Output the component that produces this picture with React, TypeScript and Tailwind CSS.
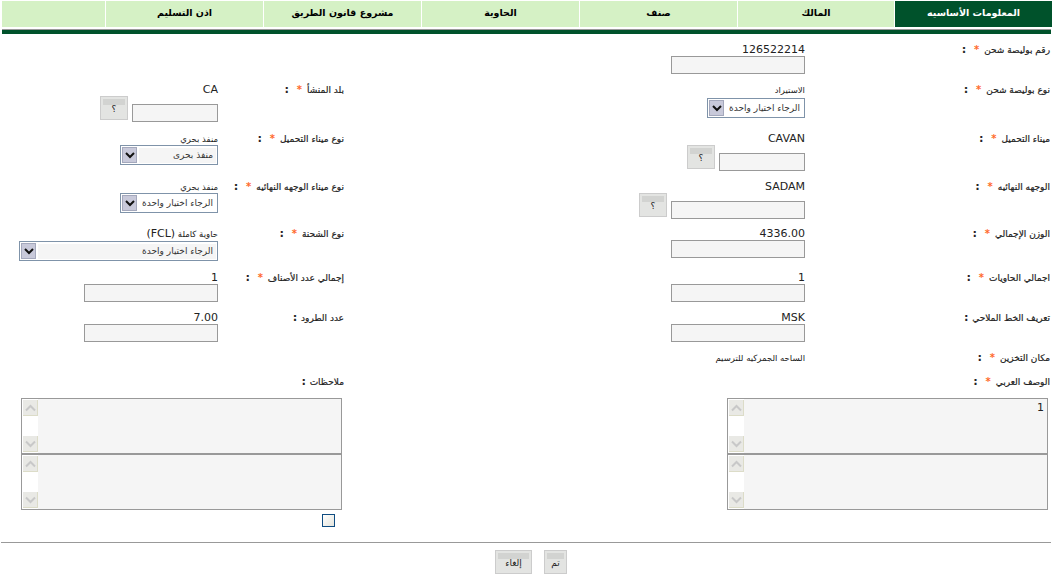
import type { ReactNode } from 'react';

const tabs = ['المعلومات الأساسيه', 'المالك', 'صنف', 'الحاوية', 'مشروع قانون الطريق', 'اذن التسليم'];

function Label({ text, required }: { text: string; required?: boolean }) {
  return (
    <div className="text-[9px] leading-[14px] text-[#222] whitespace-nowrap [-webkit-text-stroke:0.2px_#222]">
      {text}
      {required && <span className="mx-[5px] text-[10px] font-bold text-[#ff6a2b] [-webkit-text-stroke:0]">*</span>}
      <span className={required ? 'mr-[3px] text-[10px] font-bold text-[#222]' : 'mr-[4px] text-[10px] font-bold text-[#222]'}>:</span>
    </div>
  );
}

function Value({ children, small }: { children: ReactNode; small?: boolean }) {
  return (
    <div className={small ? 'h-[13px] text-[8.5px] leading-[14px] text-[#222]' : 'h-[13px] text-[11px] leading-[14px] text-[#222]'}>
      {children}
    </div>
  );
}

function TextInput({ width }: { width: string }) {
  return <input readOnly className={`${width} block h-[18px] border border-[#999] bg-[#f5f5f5]`} />;
}

function GrayButton({ label, width }: { label: string; width: string }) {
  return (
    <button className={`${width} flex h-[24px] shrink-0 flex-col border border-[#ccc] bg-[#e3e4e2] text-[9px] text-[#222]`}>
      <span className="mx-[2px] mt-[2px] h-[6px] self-stretch bg-[#d2d3d1]" />
      <span className="-mt-[3px] w-full text-center leading-[14px]">{label}</span>
    </button>
  );
}

function LookupInput({ inputWidth }: { inputWidth: string }) {
  return (
    <div className="flex items-start gap-[4px]">
      <div className="mt-[8px]">
        <TextInput width={inputWidth} />
      </div>
      <GrayButton label="؟" width="w-[28px]" />
    </div>
  );
}

function SelectBox({ text, width, shaded }: { text: string; width: string; shaded?: boolean }) {
  return (
    <div className={`${width} flex h-[20px] items-center border border-[#7f93a9] bg-white p-px`}>
      <div className={`flex-1 pr-[3px] text-[9px] leading-[15px] text-[#333] ${shaded ? 'bg-[#f5f5f5]' : ''}`}>{text}</div>
      <div className="mr-[2px] flex h-[16px] w-[15px] items-center justify-center border border-[#a4a8bc] bg-[#c8c9da]">
        <svg width="10" height="7" viewBox="0 0 10 7">
          <path d="M1 1 L5 5 L9 1" fill="none" stroke="#111" strokeWidth="2" />
        </svg>
      </div>
    </div>
  );
}

function ScrollArrow({ up }: { up?: boolean }) {
  return (
    <div className="flex h-[16px] w-[15px] items-center justify-center border-r border-b border-[#dcdcc8] bg-[#e9e9e5]">
      <svg width="11" height="8" viewBox="0 0 11 8">
        <path d={up ? 'M1 6.5 L5.5 2 L10 6.5' : 'M1 1.5 L5.5 6 L10 1.5'} fill="none" stroke="#c8c8c8" strokeWidth="2" />
      </svg>
    </div>
  );
}

function NoteBox({ text }: { text?: string }) {
  return (
    <div className="flex h-[56px] border border-[#999] bg-[#f5f5f5]">
      <div className="flex-1 pt-[2px] pr-[3px] text-[11px] leading-[14px] text-[#222]">{text}</div>
      <div className="flex w-[16px] flex-col justify-between bg-white py-px">
        <ScrollArrow up />
        <ScrollArrow />
      </div>
    </div>
  );
}

function Row({ height, children }: { height: string; children: ReactNode }) {
  return <div className={`${height} grid grid-cols-[245px_461px_126px_218px]`}>{children}</div>;
}

export default function App() {
  return (
    <div dir="rtl" className="h-[579px] w-[1053px] overflow-hidden bg-white font-['DejaVu_Sans',sans-serif]">
      <div className="flex h-[27px] gap-px pr-px pl-[2px] pt-px">
        {tabs.map((tab, i) => (
          <div
            key={tab}
            className={
              i === 0
                ? 'flex w-[157px] items-center justify-center bg-[#00522b] pb-px text-[9.5px] font-bold text-white'
                : i === 1
                  ? 'flex w-[156px] items-center justify-center bg-[#d5f1c5] pb-px text-[9.5px] font-bold text-black'
                  : 'flex w-[157px] items-center justify-center bg-[#d5f1c5] pb-px text-[9.5px] font-bold text-black'
            }
          >
            {tab}
          </div>
        ))}
        <div className="flex-1 bg-[#d5f1c5]" />
      </div>
      <div className="mt-[2px] mr-[2px] ml-[2px] h-[5px] border-t border-[#999] bg-[#00522b]" />

      <div className="mt-[9px] mr-[3px]">
        <Row height="h-[40px]">
          <Label text="رقم بوليصة شحن" required />
          <div>
            <Value>126522214</Value>
            <TextInput width="w-[134px]" />
          </div>
          <div />
          <div />
        </Row>
        <Row height="h-[49px]">
          <Label text="نوع بوليصة شحن" required />
          <div>
            <Value small>الاستيراد</Value>
            <div className="mt-[2px]">
              <SelectBox text="الرجاء اختيار واحدة" width="w-[98px]" />
            </div>
          </div>
          <Label text="بلد المنشأ" required />
          <div>
            <Value>CA</Value>
            <LookupInput inputWidth="w-[86px]" />
          </div>
        </Row>
        <Row height="h-[48px]">
          <Label text="ميناء التحميل" required />
          <div>
            <Value>CAVAN</Value>
            <LookupInput inputWidth="w-[86px]" />
          </div>
          <Label text="نوع ميناء التحميل" required />
          <div>
            <Value small>منفذ بحري</Value>
            <SelectBox text="منفذ بحرى" width="w-[98px]" shaded />
          </div>
        </Row>
        <Row height="h-[47px]">
          <Label text="الوجهه النهائيه" required />
          <div>
            <Value>SADAM</Value>
            <LookupInput inputWidth="w-[134px]" />
          </div>
          <Label text="نوع ميناء الوجهه النهائيه" required />
          <div>
            <Value small>منفذ بحري</Value>
            <SelectBox text="الرجاء اختيار واحدة" width="w-[98px]" />
          </div>
        </Row>
        <Row height="h-[44px]">
          <Label text="الوزن الإجمالي" required />
          <div>
            <Value>4336.00</Value>
            <TextInput width="w-[134px]" />
          </div>
          <Label text="نوع الشحنة" required />
          <div>
            <Value small>
              حاوية كاملة <span className="text-[11px]">(FCL)</span>
            </Value>
            <div className="mt-px">
              <SelectBox text="الرجاء اختيار واحدة" width="w-[199px]" shaded />
            </div>
          </div>
        </Row>
        <Row height="h-[40px]">
          <Label text="اجمالي الحاويات" required />
          <div>
            <Value>1</Value>
            <TextInput width="w-[134px]" />
          </div>
          <Label text="إجمالي عدد الأصناف" required />
          <div>
            <Value>1</Value>
            <TextInput width="w-[134px]" />
          </div>
        </Row>
        <Row height="h-[40px]">
          <Label text="تعريف الخط الملاحي" />
          <div>
            <Value>MSK</Value>
            <TextInput width="w-[134px]" />
          </div>
          <Label text="عدد الطرود" />
          <div>
            <Value>7.00</Value>
            <TextInput width="w-[134px]" />
          </div>
        </Row>
        <Row height="h-[24px]">
          <Label text="مكان التخزين" required />
          <Value small>الساحه الجمركيه للترسيم</Value>
          <div />
          <div />
        </Row>
        <Row height="h-[23px]">
          <Label text="الوصف العربي" required />
          <div />
          <Label text="ملاحظات" />
          <div />
        </Row>
      </div>

      <div className="flex justify-between pr-[5px] pl-[21px]">
        <div className="w-[321px]">
          <NoteBox text="1" />
          <NoteBox />
        </div>
        <div className="w-[321px]">
          <NoteBox />
          <NoteBox />
          <div className="mt-[4px] mr-[7px] h-[13px] w-[13px] border border-[#0f4c81] bg-gradient-to-br from-white to-[#e4e4dc]" />
        </div>
      </div>

      <div className="mt-[15px] mr-[2px] ml-px border-t border-[#999]" />
      <div className="mt-[7px] flex justify-center gap-[12px] pl-[9px]">
        <GrayButton label="تم" width="w-[23px]" />
        <GrayButton label="إلغاء" width="w-[37px]" />
      </div>
    </div>
  );
}
